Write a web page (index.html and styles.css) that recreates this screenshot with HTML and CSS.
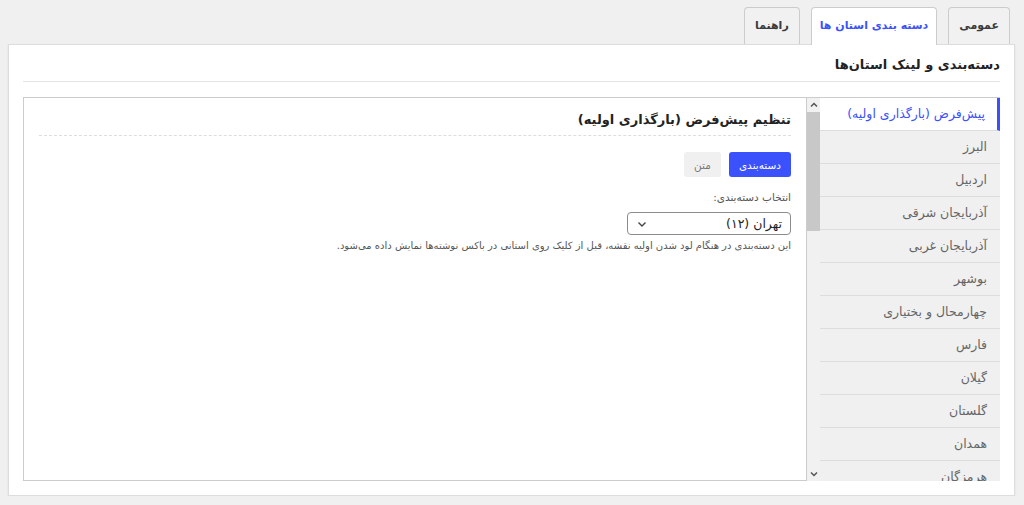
FILE: index.html
```html
<!DOCTYPE html>
<html lang="fa" dir="rtl">
<head>
  <meta charset="UTF-8">
  <title>تنظیمات نقشه</title>
  <link rel="stylesheet" href="styles.css">
</head>
<body>

  <div class="tabs">
    <div class="tab">عمومی</div>
    <div class="tab active">دسته بندی استان ها</div>
    <div class="tab">راهنما</div>
  </div>

  <div class="panel">
    <h2 class="panel-title">دسته‌بندی و لینک استان‌ها</h2>

    <div class="layout">
      <ul class="provinces">
        <li class="active">پیش‌فرض (بارگذاری اولیه)</li>
        <li>البرز</li>
        <li>اردبیل</li>
        <li>آذربایجان شرقی</li>
        <li>آذربایجان غربی</li>
        <li>بوشهر</li>
        <li>چهارمحال و بختیاری</li>
        <li>فارس</li>
        <li>گیلان</li>
        <li>گلستان</li>
        <li>همدان</li>
        <li>هرمزگان</li>
      </ul>

      <div class="scrollbar">
        <svg class="arrow" width="12" height="12" viewBox="0 0 12 12"><path d="M3 7.5 6 4.5 9 7.5" fill="none" stroke="#555" stroke-width="1.5"/></svg>
        <div class="thumb"></div>
        <div class="track"></div>
        <svg class="arrow" width="12" height="12" viewBox="0 0 12 12"><path d="M3 4.5 6 7.5 9 4.5" fill="none" stroke="#555" stroke-width="1.5"/></svg>
      </div>

      <div class="content">
        <h3 class="content-title">تنظیم پیش‌فرض (بارگذاری اولیه)</h3>

        <div class="mode">
          <button class="btn primary">دسته‌بندی</button>
          <button class="btn">متن</button>
        </div>

        <label class="field-label">انتخاب دسته‌بندی:</label>
        <div class="select">
          <span>تهران (۱۲)</span>
          <svg width="12" height="12" viewBox="0 0 12 12"><path d="M2.5 4.5 6 8 9.5 4.5" fill="none" stroke="#444" stroke-width="1.4"/></svg>
        </div>
        <p class="help">این دسته‌بندی در هنگام لود شدن اولیه نقشه، قبل از کلیک روی استانی در باکس نوشته‌ها نمایش داده می‌شود.</p>
      </div>
    </div>
  </div>

</body>
</html>
```

FILE: styles.css
```css
body {
  margin: 0;
  padding: 7px 9px 0 8px;
  background: #f0f0f0;
  font-family: 'DejaVu Sans', 'Noto Sans', sans-serif;
  color: #333;
}

.tabs {
  display: flex;
  gap: 11px;
  padding-right: 5px;
}

.tab {
  height: 36px;
  line-height: 36px;
  padding: 0 10px;
  border: 1px solid #ccc;
  border-bottom: none;
  border-radius: 4px 4px 0 0;
  background: #f1f1f1;
  font-size: 11px;
  font-weight: bold;
  color: #3a3a3a;
}

.tab.active {
  background: #fff;
  color: #3b51fb;
  position: relative;
  margin-bottom: -1px;
  height: 37px;
  padding: 0 8px;
}

.panel {
  height: 450px;
  background: #fff;
  border: 1px solid #ddd;
  box-shadow: 0 1px 2px rgba(0, 0, 0, 0.08);
  padding: 0 14px;
}

.panel-title {
  margin: 0 0 15px;
  padding: 10px 0 6px;
  font-size: 13px;
  line-height: 20px;
  border-bottom: 1px solid #e4e4e4;
  color: #222;
}

.layout {
  display: flex;
  height: 384px;
}

.provinces {
  width: 180px;
  margin: 0;
  padding: 0;
  list-style: none;
  overflow: hidden;
  background: #f0f0f0;
  border-top: 1px solid #ccc;
}

.provinces li {
  height: 32px;
  line-height: 32px;
  padding: 0 13px;
  font-size: 12.5px;
  color: #666;
  border-bottom: 1px solid #ddd;
}

.provinces li.active {
  background: #fff;
  color: #3b51fb;
  border-right: 3px solid #3b51fb;
  padding-right: 12px;
}

.scrollbar {
  width: 13px;
  display: flex;
  flex-direction: column;
  align-items: center;
  background: #f1f1f1;
  border-top: 1px solid #ccc;
}

.scrollbar .arrow {
  flex: none;
  margin: 1px 0;
}

.thumb {
  width: 13px;
  height: 119px;
  background: #c8c8c8;
}

.track {
  flex: 1;
}

.content {
  flex: 1;
  border: 1px solid #ccc;
  padding: 0 15px;
}

.content-title {
  margin: 0;
  padding: 12px 0 5px;
  font-size: 13px;
  line-height: 20px;
  color: #222;
  border-bottom: 1px dashed #ddd;
}

.mode {
  display: flex;
  gap: 8px;
  margin-top: 16px;
}

.btn {
  height: 25px;
  padding: 0 10px;
  border: none;
  border-radius: 3px;
  background: #f0f0f0;
  color: #777;
  font-family: inherit;
  font-size: 10.5px;
}

.btn.primary {
  background: #3b51fb;
  color: #fff;
  padding: 0 10px;
}

.field-label {
  display: block;
  margin-top: 12px;
  font-size: 10.5px;
  line-height: 16px;
  color: #555;
}

.select {
  width: 146px;
  height: 21px;
  margin-top: 7px;
  padding: 0 8px;
  display: flex;
  justify-content: space-between;
  align-items: center;
  border: 1px solid #8c8c8c;
  border-radius: 4px;
  font-size: 12.5px;
  color: #222;
}

.help {
  margin: 3px 0 0;
  font-size: 10px;
  line-height: 16px;
  color: #555;
}
```
